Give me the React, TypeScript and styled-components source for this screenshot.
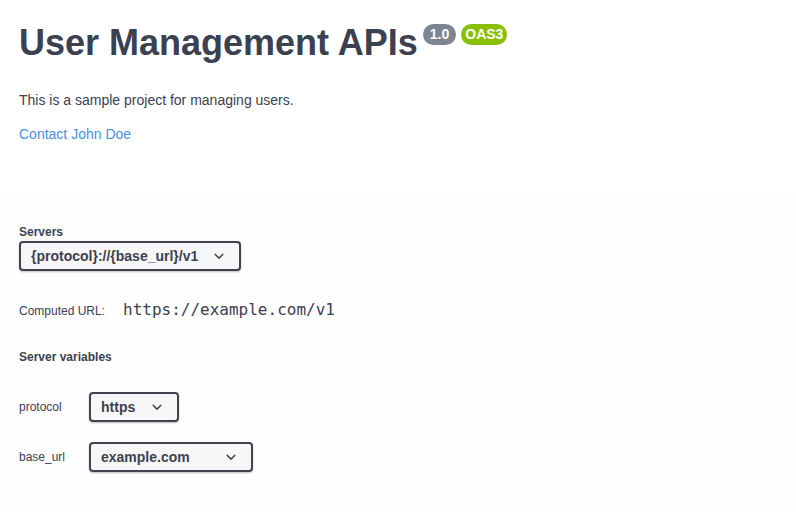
import React from "react";
import styled, { createGlobalStyle } from "styled-components";

const GlobalStyle = createGlobalStyle`
  html, body { margin: 0; padding: 0; background: #fff; }
  body { font-family: "Liberation Sans", Arial, sans-serif; color: #3b4151; }
`;

const Page = styled.div`
  display: flex;
  flex-direction: column;
`;

const Info = styled.section`
  padding: 19px 19px 0;
  height: 193px;
  box-sizing: border-box;
`;

const Title = styled.h2`
  margin: 0;
  font-size: 36px;
  font-weight: 700;
  line-height: 48px;
  color: #3b4151;
  display: flex;
  align-items: flex-start;
`;

const Badge = styled.span<{ $bg: string; $px: number }>`
  display: inline-block;
  margin: 5px 0 0 5px;
  padding: 2px ${(p) => p.$px}px;
  border-radius: 57px;
  background: ${(p) => p.$bg};
  color: #fff;
  font-size: 14px;
  font-weight: 700;
  line-height: 17px;
`;

const Description = styled.p`
  margin: 25px 0 0;
  font-size: 14px;
  line-height: 17px;
`;

const Link = styled.a`
  display: block;
  margin-top: 17px;
  font-size: 14px;
  line-height: 17px;
  color: #4990e2;
  text-decoration: none;
`;

const SchemeContainer = styled.section`
  background: #fefefe;
  box-shadow: 0 1px 2px 0 rgba(0, 0, 0, 0.15);
  padding: 32px 19px 0;
  height: 318px;
  box-sizing: border-box;
`;

const Label = styled.div`
  font-size: 12px;
  font-weight: 700;
  line-height: 15px;
  margin-bottom: 1px;
`;

const Select = styled.div`
  display: inline-flex;
  align-items: center;
  box-sizing: border-box;
  height: 30px;
  padding: 0 10px 0 10px;
  border: 2px solid #41444e;
  border-radius: 4px;
  background: #f7f7f7;
  box-shadow: 0 1px 2px 0 rgba(0, 0, 0, 0.25);
  font-size: 14px;
  font-weight: 700;
  color: #3b4151;
  gap: 10px;
`;

const SelectText = styled.span<{ $w?: number }>`
  min-width: ${(p) => (p.$w ? `${p.$w}px` : "auto")};
`;

const ComputedRow = styled.div`
  display: flex;
  align-items: baseline;
  margin-top: 29px;
`;

const SmallLabel = styled.span`
  font-size: 12px;
  width: 104px;
`;

const Code = styled.code`
  font-family: "DejaVu Sans Mono", monospace;
  font-size: 16px;
`;

const VarsHeading = styled.h4`
  margin: 31px 0 0;
  font-size: 12px;
  font-weight: 700;
  line-height: 15px;
`;

const VarRows = styled.div`
  display: flex;
  flex-direction: column;
  gap: 20px;
  margin-top: 27px;
`;

const VarRow = styled.div`
  display: flex;
  align-items: center;
`;

const VarName = styled.span`
  font-size: 12px;
  width: 70px;
  margin-top: -1px;
`;

const Chevron = () => (
  <svg width="20" height="20" viewBox="0 0 20 20">
    <path
      fill="#3b4151"
      d="M13.418 7.859a.695.695 0 01.978 0 .68.68 0 010 .969l-3.908 3.83a.697.697 0 01-.979 0l-3.908-3.83a.68.68 0 010-.969.695.695 0 01.978 0L10 11l3.418-3.141z"
    />
  </svg>
);

export default function App() {
  return (
    <Page>
      <GlobalStyle />
      <Info>
        <Title>
          User Management APIs
          <Badge $bg="#7d8492" $px={7}>1.0</Badge>
          <Badge $bg="#89bf04" $px={4}>OAS3</Badge>
        </Title>
        <Description>This is a sample project for managing users.</Description>
        <Link href="#">Contact John Doe</Link>
      </Info>
      <SchemeContainer>
        <Label>Servers</Label>
        <Select>
          <SelectText $w={168}>{"{protocol}://{base_url}/v1"}</SelectText>
          <Chevron />
        </Select>
        <ComputedRow>
          <SmallLabel>Computed URL:</SmallLabel>
          <Code>https://example.com/v1</Code>
        </ComputedRow>
        <VarsHeading>Server variables</VarsHeading>
        <VarRows>
          <VarRow>
            <VarName>protocol</VarName>
            <Select>
              <SelectText $w={36}>https</SelectText>
              <Chevron />
            </Select>
          </VarRow>
          <VarRow>
            <VarName>base_url</VarName>
            <Select>
              <SelectText $w={110}>example.com</SelectText>
              <Chevron />
            </Select>
          </VarRow>
        </VarRows>
      </SchemeContainer>
    </Page>
  );
}
